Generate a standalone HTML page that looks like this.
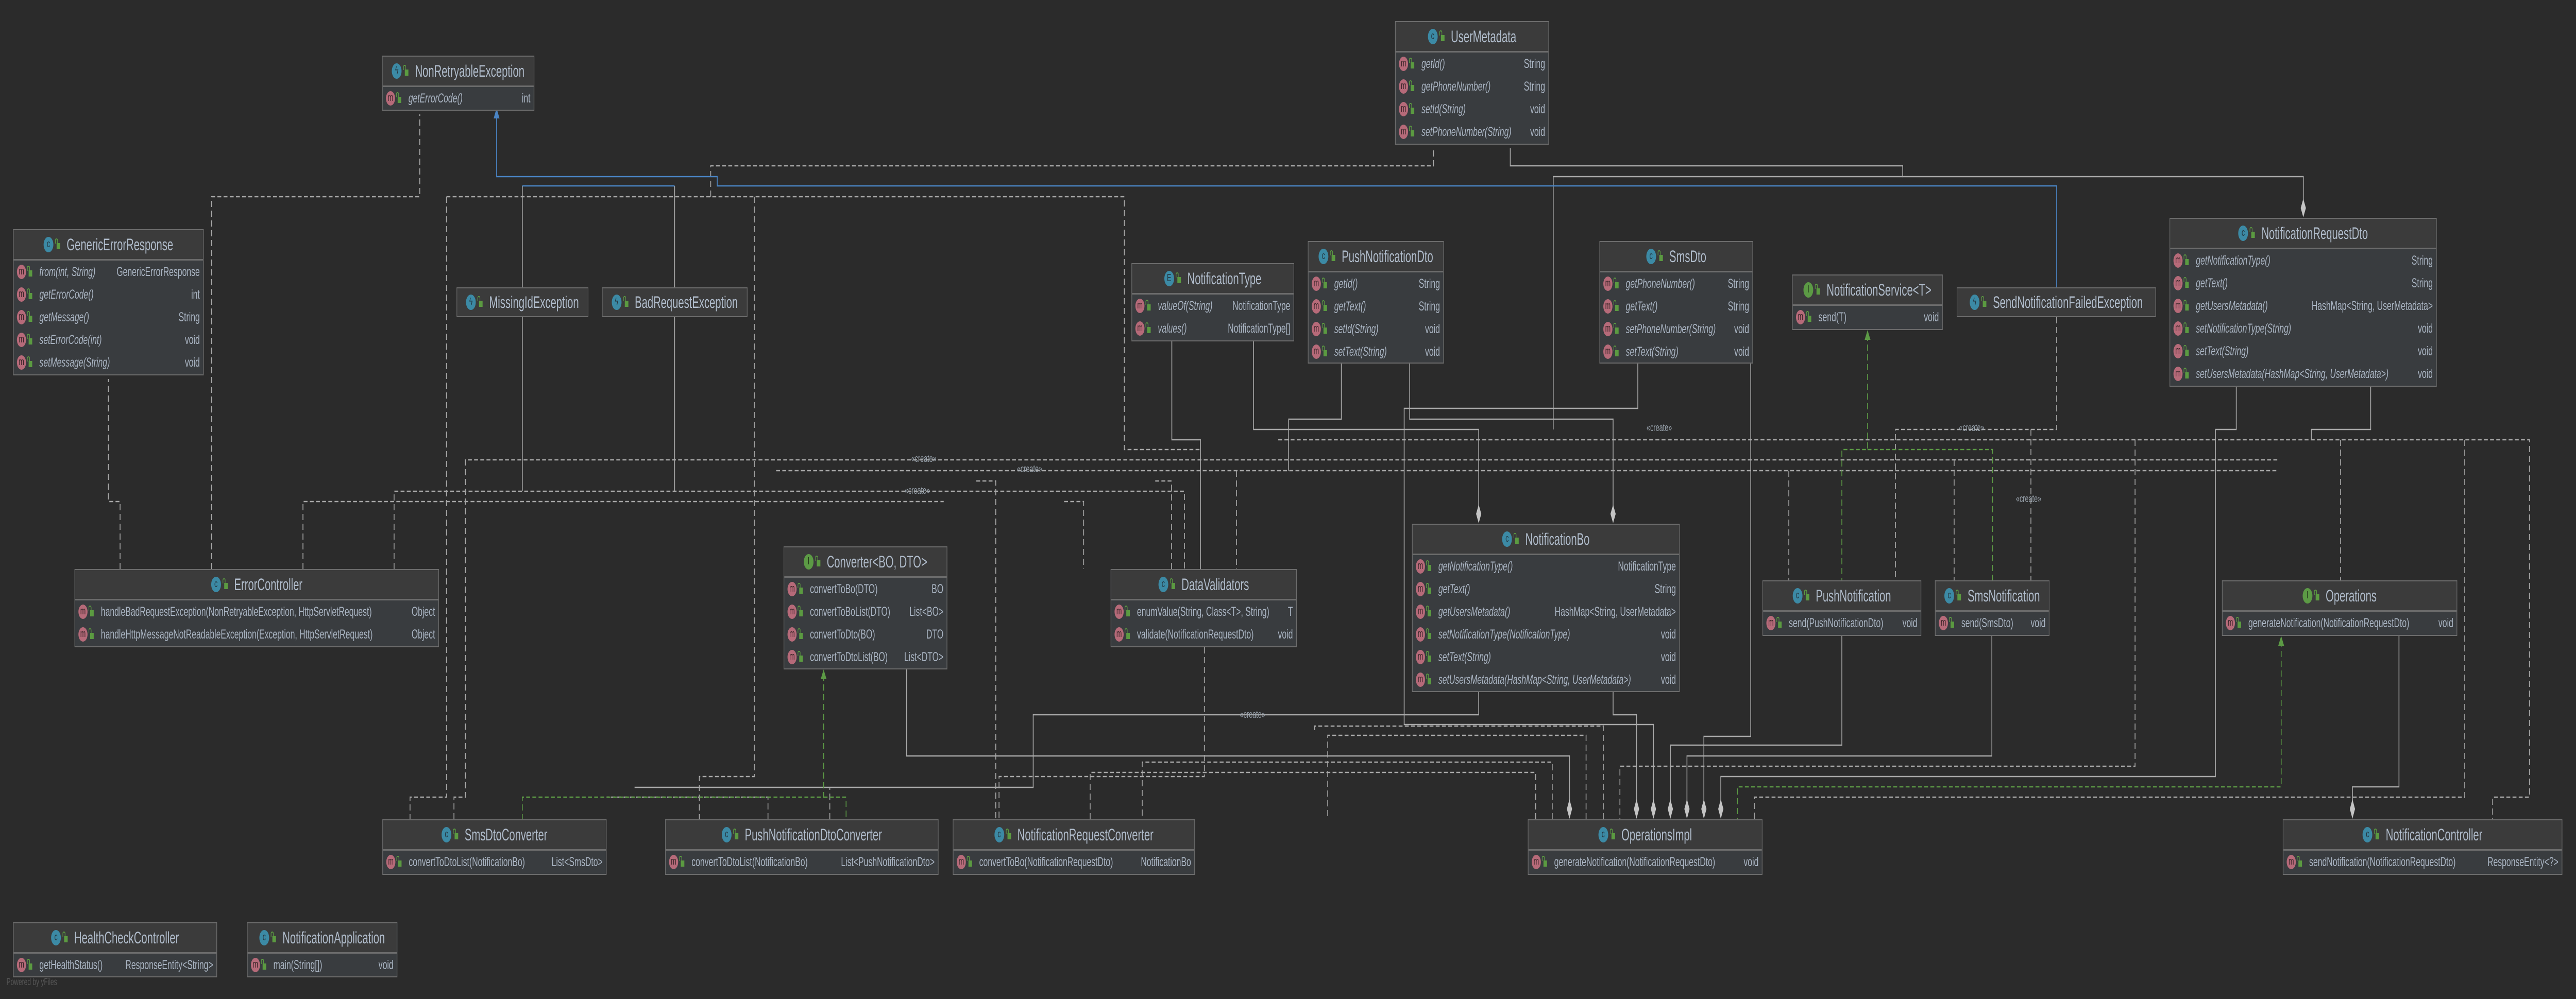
<!DOCTYPE html>
<html><head><meta charset="utf-8"><style>
html,body{margin:0;padding:0;background:#2b2b2b;overflow:hidden;font-family:"Liberation Sans",sans-serif}
#w{position:absolute;left:0;top:0;width:7916px;height:1940px;transform-origin:0 0;background:#2b2b2b}
.b{position:absolute;background:#393c3f;border:2px solid #6c6c6c;box-sizing:border-box}
.h{height:56px;border-bottom:3px solid #6c6c6c;display:flex;align-items:center;justify-content:center;background:#3b3b3b;font-size:32px;color:#b0bccb;white-space:nowrap}
.r{height:44px;display:flex;align-items:center;padding:0 10px;font-size:25px;color:#aab5c3;white-space:nowrap}
.r .n{flex:1;overflow:hidden}
.r .t{margin-left:10px}
.i .n{font-style:italic}
.mi{width:28px;height:28px;border-radius:50%;background:#b66a79;color:#3a2529;font-size:20px;text-align:center;line-height:26px;flex:none;margin-right:8px}
.lk{width:11px;height:12px;background:#5b9a41;flex:none;margin-right:22px;margin-top:6px;position:relative}
.lk:before{content:"";position:absolute;left:-5px;top:-9px;width:5px;height:8px;border:2px solid #5b9a41;border-bottom:none;border-radius:4px 4px 0 0}
.h .lk{margin-right:20px}
.ci{width:30px;height:30px;border-radius:50%;background:#3c8aa5;color:#243640;font-size:20px;text-align:center;line-height:28px;flex:none;margin-right:10px}
.gi{background:#5c9a45;color:#22341a}
svg{position:absolute;left:0;top:0}
.lbl{position:absolute;color:#9aa4ae;font-size:20px;white-space:nowrap}
</style></head><body>
<div id="w">
<svg width="7916" height="1940" viewBox="0 0 7916 1940">
<g fill="none" stroke="#a8a8a8" stroke-width="2.5">
<path d="M1605 361V558M2073 361V558"/>
<path d="M1605 616V954M2073 616V954"/>
<path d="M4641 288V322H5847V343H7078V416"/>
<path d="M4773 834V343H5847"/>
<path d="M3601 663V854H3689V1105"/>
<path d="M3852 663V834H4544V1010"/>
<path d="M4122 706V814H3960V914"/>
<path d="M4332 706V814H4957V1010"/>
<path d="M5033 706V793H4315V1407H5081V1575"/>
<path d="M4544 1344V1388H3175V1529H1950"/>
<path d="M4957 1344V1388H5029V1575"/>
<path d="M2786 1300V1468H4823V1575"/>
<path d="M5660 1235V1447H5133V1575"/>
<path d="M6121 1235V1468H5184V1575"/>
<path d="M5380 706V1430H5236V1575"/>
<path d="M6872 751V834H6808V1508H5288V1575"/>
<path d="M7285 751V834H7103V854"/>
<path d="M7372 1235V1528H7229V1580"/>
</g>
<g fill="none" stroke="#a8a8a8" stroke-width="2.5" stroke-dasharray="12 7">
<path d="M650 1105V382H1290V222"/>
<path d="M369 1105V974H333V736"/>
<path d="M931 1105V974H2900"/>
<path d="M1211 1105V954H3455"/>
<path d="M2184 382V322H4405V288"/>
<path d="M1372 382H3455V873H3689"/>
<path d="M1372 382V1548H1260V1591"/>
<path d="M2318 382V1508H2149V1591"/>
<path d="M1395 1591V1548H1430V893H7000"/>
<path d="M2385 914H7000"/>
<path d="M3928 854H7773V1548H7660V1591"/>
<path d="M3455 954H3640V1105M3270 974H3330V1105"/>
<path d="M3800 914V1105"/>
<path d="M3550 934H3600V1105"/>
<path d="M6320 616V834H5825V1127"/>
<path d="M6241 834V1127"/>
<path d="M6005 893V1127M5497 914V1127"/>
<path d="M6561 854V1488H4978V1591"/>
<path d="M7192 854V1127"/>
<path d="M7574 854V1548H5391V1591"/>
<path d="M3701 1257V1508H3070V1591"/>
<path d="M3000 934H3060V1591"/>
<path d="M4719 1591V1500H3350V1591"/>
<path d="M4770 1591V1480H3510V1591"/>
<path d="M4874 1591V1428H4080V1591"/>
<path d="M4927 1591V1410H4040V1420"/>
<path d="M2360 1591V1548H1864"/>
<path d="M2550 1591V1530"/>
</g>
<g fill="none" stroke="#4a84c4" stroke-width="2.5">
<path d="M1526 222V343H2204V361H6320V558"/>
<path d="M1605 361H2073"/>
</g>
<polygon points="1526,210 1517,230 1535,230" fill="#4a84c4"/>
<g fill="none" stroke="#5c9a45" stroke-width="2.5" stroke-dasharray="12 7">
<path d="M5739 650V873H5660V1127M5739 873H6123V1127"/>
<path d="M7010 1245V1528H5339V1591"/>
<path d="M2531 1310V1548H1605V1591M2531 1548H2600V1591"/>
</g>
<polygon points="5739,641 5730,660 5748,660" fill="#5c9a45"/>
<polygon points="7010,1235 7001,1254 7019,1254" fill="#5c9a45"/>
<polygon points="2531,1300 2522,1319 2540,1319" fill="#5c9a45"/>
<g fill="#c4c4c4">
<polygon points="4823,1552 4831,1571 4823,1590 4815,1571"/>
<polygon points="5029,1552 5037,1571 5029,1590 5021,1571"/>
<polygon points="5081,1552 5089,1571 5081,1590 5073,1571"/>
<polygon points="5133,1552 5141,1571 5133,1590 5125,1571"/>
<polygon points="5184,1552 5192,1571 5184,1590 5176,1571"/>
<polygon points="5236,1552 5244,1571 5236,1590 5228,1571"/>
<polygon points="5288,1552 5296,1571 5288,1590 5280,1571"/>
<polygon points="4544,980 4552,998 4544,1016 4536,998"/>
<polygon points="4957,980 4965,998 4957,1016 4949,998"/>
<polygon points="7078,386 7086,404 7078,422 7070,404"/>
<polygon points="7229,1552 7237,1571 7229,1590 7221,1571"/>
</g>
</svg>

<div class="lbl" style="left:2800px;top:880px">«create»</div>
<div class="lbl" style="left:3125px;top:900px">«create»</div>
<div class="lbl" style="left:2780px;top:942px">«create»</div>
<div class="lbl" style="left:3810px;top:1377px">«create»</div>
<div class="lbl" style="left:6020px;top:820px">«create»</div>
<div class="lbl" style="left:6195px;top:958px">«create»</div>
<div class="lbl" style="left:5060px;top:820px">«create»</div>
<div class="lbl" style="left:20px;top:1897px;color:#555;font-size:19px">Powered by yFiles</div>

<div class="b" style="left:1174px;top:108px;width:468px;height:107px"><div class="h"><span class="ci">ϟ</span><span class="lk"></span>NonRetryableException</div>
<div class="r i"><span class="mi">m</span><span class="lk"></span><span class="n">getErrorCode()</span><span class="t">int</span></div></div>

<div class="b" style="left:40px;top:445px;width:586px;height:284px"><div class="h"><span class="ci">c</span><span class="lk"></span>GenericErrorResponse</div>
<div class="r i"><span class="mi">m</span><span class="lk"></span><span class="n">from(int, String)</span><span class="t">GenericErrorResponse</span></div>
<div class="r i"><span class="mi">m</span><span class="lk"></span><span class="n">getErrorCode()</span><span class="t">int</span></div>
<div class="r i"><span class="mi">m</span><span class="lk"></span><span class="n">getMessage()</span><span class="t">String</span></div>
<div class="r i"><span class="mi">m</span><span class="lk"></span><span class="n">setErrorCode(int)</span><span class="t">void</span></div>
<div class="r i"><span class="mi">m</span><span class="lk"></span><span class="n">setMessage(String)</span><span class="t">void</span></div></div>

<div class="b" style="left:1403px;top:558px;width:405px;height:58px"><div class="h" style="border:none;height:54px"><span class="ci">ϟ</span><span class="lk"></span>MissingIdException</div></div>
<div class="b" style="left:1850px;top:558px;width:447px;height:58px"><div class="h" style="border:none;height:54px"><span class="ci">ϟ</span><span class="lk"></span>BadRequestException</div></div>

<div class="b" style="left:229px;top:1105px;width:1120px;height:152px"><div class="h"><span class="ci">c</span><span class="lk"></span>ErrorController</div>
<div class="r"><span class="mi">m</span><span class="lk"></span><span class="n">handleBadRequestException(NonRetryableException, HttpServletRequest)</span><span class="t">Object</span></div>
<div class="r"><span class="mi">m</span><span class="lk"></span><span class="n">handleHttpMessageNotReadableException(Exception, HttpServletRequest)</span><span class="t">Object</span></div></div>

<div class="b" style="left:1175px;top:1591px;width:689px;height:108px"><div class="h"><span class="ci">c</span><span class="lk"></span>SmsDtoConverter</div>
<div class="r"><span class="mi">m</span><span class="lk"></span><span class="n">convertToDtoList(NotificationBo)</span><span class="t">List&lt;SmsDto&gt;</span></div></div>

<div class="b" style="left:2044px;top:1591px;width:840px;height:108px"><div class="h"><span class="ci">c</span><span class="lk"></span>PushNotificationDtoConverter</div>
<div class="r"><span class="mi">m</span><span class="lk"></span><span class="n">convertToDtoList(NotificationBo)</span><span class="t">List&lt;PushNotificationDto&gt;</span></div></div>

<div class="b" style="left:2928px;top:1591px;width:744px;height:108px"><div class="h"><span class="ci">c</span><span class="lk"></span>NotificationRequestConverter</div>
<div class="r"><span class="mi">m</span><span class="lk"></span><span class="n">convertToBo(NotificationRequestDto)</span><span class="t">NotificationBo</span></div></div>

<div class="b" style="left:2408px;top:1061px;width:503px;height:239px"><div class="h"><span class="ci gi">I</span><span class="lk"></span>Converter&lt;BO, DTO&gt;</div>
<div class="r"><span class="mi">m</span><span class="lk"></span><span class="n">convertToBo(DTO)</span><span class="t">BO</span></div>
<div class="r"><span class="mi">m</span><span class="lk"></span><span class="n">convertToBoList(DTO)</span><span class="t">List&lt;BO&gt;</span></div>
<div class="r"><span class="mi">m</span><span class="lk"></span><span class="n">convertToDto(BO)</span><span class="t">DTO</span></div>
<div class="r"><span class="mi">m</span><span class="lk"></span><span class="n">convertToDtoList(BO)</span><span class="t">List&lt;DTO&gt;</span></div></div>

<div class="b" style="left:40px;top:1791px;width:627px;height:107px"><div class="h"><span class="ci">c</span><span class="lk"></span>HealthCheckController</div>
<div class="r"><span class="mi">m</span><span class="lk"></span><span class="n">getHealthStatus()</span><span class="t">ResponseEntity&lt;String&gt;</span></div></div>

<div class="b" style="left:759px;top:1791px;width:462px;height:107px"><div class="h"><span class="ci">c</span><span class="lk"></span>NotificationApplication</div>
<div class="r"><span class="mi">m</span><span class="lk"></span><span class="n">main(String[])</span><span class="t">void</span></div></div>

<div class="b" style="left:4287px;top:41px;width:473px;height:240px"><div class="h"><span class="ci">c</span><span class="lk"></span>UserMetadata</div>
<div class="r i"><span class="mi">m</span><span class="lk"></span><span class="n">getId()</span><span class="t">String</span></div>
<div class="r i"><span class="mi">m</span><span class="lk"></span><span class="n">getPhoneNumber()</span><span class="t">String</span></div>
<div class="r i"><span class="mi">m</span><span class="lk"></span><span class="n">setId(String)</span><span class="t">void</span></div>
<div class="r i"><span class="mi">m</span><span class="lk"></span><span class="n">setPhoneNumber(String)</span><span class="t">void</span></div></div>

<div class="b" style="left:3477px;top:511px;width:500px;height:152px"><div class="h"><span class="ci">E</span><span class="lk"></span>NotificationType</div>
<div class="r i"><span class="mi">m</span><span class="lk"></span><span class="n">valueOf(String)</span><span class="t" style="font-style:normal">NotificationType</span></div>
<div class="r i"><span class="mi">m</span><span class="lk"></span><span class="n">values()</span><span class="t" style="font-style:normal">NotificationType[]</span></div></div>

<div class="b" style="left:4019px;top:468px;width:418px;height:238px"><div class="h"><span class="ci">c</span><span class="lk"></span>PushNotificationDto</div>
<div class="r i"><span class="mi">m</span><span class="lk"></span><span class="n">getId()</span><span class="t">String</span></div>
<div class="r i"><span class="mi">m</span><span class="lk"></span><span class="n">getText()</span><span class="t">String</span></div>
<div class="r i"><span class="mi">m</span><span class="lk"></span><span class="n">setId(String)</span><span class="t">void</span></div>
<div class="r i"><span class="mi">m</span><span class="lk"></span><span class="n">setText(String)</span><span class="t">void</span></div></div>

<div class="b" style="left:4915px;top:468px;width:472px;height:238px"><div class="h"><span class="ci">c</span><span class="lk"></span>SmsDto</div>
<div class="r i"><span class="mi">m</span><span class="lk"></span><span class="n">getPhoneNumber()</span><span class="t">String</span></div>
<div class="r i"><span class="mi">m</span><span class="lk"></span><span class="n">getText()</span><span class="t">String</span></div>
<div class="r i"><span class="mi">m</span><span class="lk"></span><span class="n">setPhoneNumber(String)</span><span class="t">void</span></div>
<div class="r i"><span class="mi">m</span><span class="lk"></span><span class="n">setText(String)</span><span class="t">void</span></div></div>

<div class="b" style="left:3413px;top:1105px;width:572px;height:152px"><div class="h"><span class="ci">c</span><span class="lk"></span>DataValidators</div>
<div class="r"><span class="mi">m</span><span class="lk"></span><span class="n">enumValue(String, Class&lt;T&gt;, String)</span><span class="t">T</span></div>
<div class="r"><span class="mi">m</span><span class="lk"></span><span class="n">validate(NotificationRequestDto)</span><span class="t">void</span></div></div>

<div class="b" style="left:4339px;top:1017px;width:823px;height:327px"><div class="h"><span class="ci">c</span><span class="lk"></span>NotificationBo</div>
<div class="r i"><span class="mi">m</span><span class="lk"></span><span class="n">getNotificationType()</span><span class="t" style="font-style:normal">NotificationType</span></div>
<div class="r i"><span class="mi">m</span><span class="lk"></span><span class="n">getText()</span><span class="t" style="font-style:normal">String</span></div>
<div class="r i"><span class="mi">m</span><span class="lk"></span><span class="n">getUsersMetadata()</span><span class="t" style="font-style:normal">HashMap&lt;String, UserMetadata&gt;</span></div>
<div class="r i"><span class="mi">m</span><span class="lk"></span><span class="n">setNotificationType(NotificationType)</span><span class="t" style="font-style:normal">void</span></div>
<div class="r i"><span class="mi">m</span><span class="lk"></span><span class="n">setText(String)</span><span class="t" style="font-style:normal">void</span></div>
<div class="r i"><span class="mi">m</span><span class="lk"></span><span class="n">setUsersMetadata(HashMap&lt;String, UserMetadata&gt;)</span><span class="t" style="font-style:normal">void</span></div></div>

<div class="b" style="left:4695px;top:1591px;width:721px;height:108px"><div class="h"><span class="ci">c</span><span class="lk"></span>OperationsImpl</div>
<div class="r"><span class="mi">m</span><span class="lk"></span><span class="n">generateNotification(NotificationRequestDto)</span><span class="t">void</span></div></div>

<div class="b" style="left:5507px;top:533px;width:463px;height:108px"><div class="h"><span class="ci gi">I</span><span class="lk"></span>NotificationService&lt;T&gt;</div>
<div class="r"><span class="mi">m</span><span class="lk"></span><span class="n">send(T)</span><span class="t">void</span></div></div>

<div class="b" style="left:6013px;top:558px;width:612px;height:58px"><div class="h" style="border:none;height:54px"><span class="ci">ϟ</span><span class="lk"></span>SendNotificationFailedException</div></div>

<div class="b" style="left:6667px;top:423px;width:821px;height:328px"><div class="h"><span class="ci">c</span><span class="lk"></span>NotificationRequestDto</div>
<div class="r i"><span class="mi">m</span><span class="lk"></span><span class="n">getNotificationType()</span><span class="t" style="font-style:normal">String</span></div>
<div class="r i"><span class="mi">m</span><span class="lk"></span><span class="n">getText()</span><span class="t" style="font-style:normal">String</span></div>
<div class="r i"><span class="mi">m</span><span class="lk"></span><span class="n">getUsersMetadata()</span><span class="t" style="font-style:normal">HashMap&lt;String, UserMetadata&gt;</span></div>
<div class="r i"><span class="mi">m</span><span class="lk"></span><span class="n">setNotificationType(String)</span><span class="t" style="font-style:normal">void</span></div>
<div class="r i"><span class="mi">m</span><span class="lk"></span><span class="n">setText(String)</span><span class="t" style="font-style:normal">void</span></div>
<div class="r i"><span class="mi">m</span><span class="lk"></span><span class="n">setUsersMetadata(HashMap&lt;String, UserMetadata&gt;)</span><span class="t" style="font-style:normal">void</span></div></div>

<div class="b" style="left:5416px;top:1127px;width:488px;height:108px"><div class="h"><span class="ci">c</span><span class="lk"></span>PushNotification</div>
<div class="r"><span class="mi">m</span><span class="lk"></span><span class="n">send(PushNotificationDto)</span><span class="t">void</span></div></div>

<div class="b" style="left:5946px;top:1127px;width:352px;height:108px"><div class="h"><span class="ci">c</span><span class="lk"></span>SmsNotification</div>
<div class="r"><span class="mi">m</span><span class="lk"></span><span class="n">send(SmsDto)</span><span class="t">void</span></div></div>

<div class="b" style="left:6828px;top:1127px;width:723px;height:108px"><div class="h"><span class="ci gi">I</span><span class="lk"></span>Operations</div>
<div class="r"><span class="mi">m</span><span class="lk"></span><span class="n">generateNotification(NotificationRequestDto)</span><span class="t">void</span></div></div>

<div class="b" style="left:7015px;top:1591px;width:859px;height:108px"><div class="h"><span class="ci">c</span><span class="lk"></span>NotificationController</div>
<div class="r"><span class="mi">m</span><span class="lk"></span><span class="n">sendNotification(NotificationRequestDto)</span><span class="t">ResponseEntity&lt;?&gt;</span></div></div>
</div>
<script>
(function(){var w=document.getElementById('w');function f(){var sx=window.innerWidth/7916,sy=window.innerHeight/1940;if(Math.abs(sx-1)>0.001||Math.abs(sy-1)>0.001){w.style.transform='scale('+sx+','+sy+')';}else{w.style.transform='none';}}f();window.addEventListener('resize',f);})();
</script>
</body></html>
